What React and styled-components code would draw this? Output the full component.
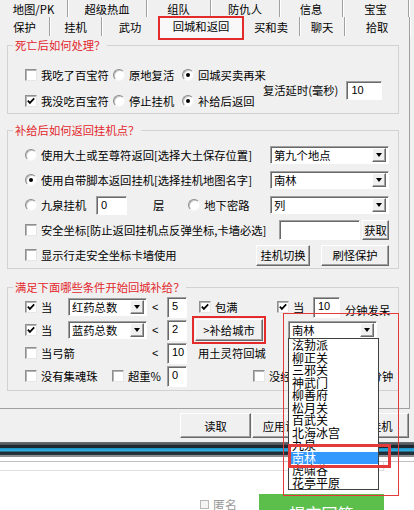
import React from 'react';
import styled, { createGlobalStyle, css } from 'styled-components';

const GlobalStyle = createGlobalStyle`
  html, body { margin: 0; padding: 0; background: #fff; }
  body {
    font-family: "Noto Sans CJK SC", "Noto Sans", sans-serif;
    font-size: 11.3px;
    color: #000;
  }
  * { box-sizing: border-box; }
`;

const topTabs = [
  { label: '地图/PK', w: 68 },
  { label: '超级热血', w: 79 },
  { label: '组队', w: 64 },
  { label: '防仇人', w: 69 },
  { label: '信息', w: 63 },
  { label: '宝宝', w: 66 },
];

const bottomTabs = [
  { label: '保护', w: 50 },
  { label: '挂机', w: 52 },
  { label: '武功', w: 57 },
  { label: '回城和返回', w: 84, active: true },
  { label: '买和卖', w: 57 },
  { label: '聊天', w: 45 },
  { label: '拾取', w: 65 },
];

const cities = [
  '泫勃派', '柳正关', '三邪关', '神武门', '柳善府', '松月关',
  '百武关', '北海冰宫', '九泉', '南林', '虎啸谷', '花亭平原',
];

export default function App() {
  return (
    <>
      <GlobalStyle />
      <Window>
        <Dialog>
          <TabStrip>
            <TabRow $h={17}>
              {topTabs.map((t) => (
                <Tab key={t.label} $w={t.w}>{t.label}</Tab>
              ))}
            </TabRow>
            <TabRow $h={19}>
              {bottomTabs.map((t) => (
                <Tab key={t.label} $w={t.w} $active={t.active}>{t.label}</Tab>
              ))}
            </TabRow>
          </TabStrip>

          <Panel>
            <Group $mt={0} $pt={13} $pb={2}>
              <Legend>死亡后如何处理？</Legend>
              <DeathBody>
                <ChoiceGrid>
                  <Check>我吃了百宝符</Check>
                  <Radio>原地复活</Radio>
                  <Radio checked>回城买卖再来</Radio>
                  <Check checked>我没吃百宝符</Check>
                  <Radio>停止挂机</Radio>
                  <Radio checked>补给后返回</Radio>
                </ChoiceGrid>
                <DelayBox>
                  <span>复活延时(毫秒)</span>
                  <Field $w={36} $h={19}>10</Field>
                </DelayBox>
              </DeathBody>
            </Group>

            <Group $mt={9} $pt={8} $pb={3}>
              <Legend>补给后如何返回挂机点？</Legend>
              <Rows $gap={5}>
                <Row>
                  <Radio>使用大土或至尊符返回[选择大土保存位置]</Radio>
                  <Select $w={119} $ml="auto">第九个地点</Select>
                </Row>
                <Row>
                  <Radio checked>使用自带脚本返回挂机[选择挂机地图名字]</Radio>
                  <Select $w={119} $ml="auto">南林</Select>
                </Row>
                <Row>
                  <Radio w={71}>九泉挂机</Radio>
                  <Field $w={31} $h={19}>0</Field>
                  <Text $ml={26}>层</Text>
                  <Radio ml={24}>地下密路</Radio>
                  <Select $w={119} $ml="auto">列</Select>
                </Row>
                <Row>
                  <Check>安全坐标[防止返回挂机点反弹坐标,卡墙必选]</Check>
                  <Field $w={81} $h={20} $ml="auto" />
                  <Button $w={27} $h={20} $ml={2}>获取</Button>
                </Row>
                <Row>
                  <Check>显示行走安全坐标卡墙使用</Check>
                  <Button $w={54} $h={21} $ml="auto">挂机切换</Button>
                  <Button $w={68} $h={21} $ml={11}>刷怪保护</Button>
                </Row>
              </Rows>
            </Group>

            <Group $mt={11} $pt={3} $pb={4}>
              <Legend>满足下面哪些条件开始回城补给？</Legend>
              <Rows $gap={3}>
                <Row>
                  <Check checked w={43}>当</Check>
                  <Select $w={79}>红药总数</Select>
                  <Less>&lt;</Less>
                  <Field $w={20} $h={21}>5</Field>
                  <Check checked w={78} ml={12}>包满</Check>
                  <Check checked w={36}>当</Check>
                  <Field $w={27} $h={21}>10</Field>
                  <Text $ml={5} $dy={3}>分钟发呆</Text>
                </Row>
                <Row>
                  <Check checked w={43}>当</Check>
                  <Select $w={79}>蓝药总数</Select>
                  <Less>&lt;</Less>
                  <Field $w={20} $h={21}>2</Field>
                  <Button $w={68} $h={22} $ml={8} $marked>&gt;补给城市</Button>
                  <Select $w={89} $h={18} $ml={25}>南林</Select>
                </Row>
                <Row>
                  <Check w={122}>当弓箭</Check>
                  <Less>&lt;</Less>
                  <Field $w={20} $h={21}>10</Field>
                  <Text $ml={11}>用土灵符回城</Text>
                </Row>
                <Row>
                  <Check w={87}>没有集魂珠</Check>
                  <Check w={55}>超重%</Check>
                  <Field $w={20} $h={21}>0</Field>
                  <Check ml={66}>没经验挂机超过十五分钟</Check>
                </Row>
              </Rows>
            </Group>
          </Panel>

          <ActionRow>
            <Button $w={71} $h={25}>读取</Button>
            <Button $w={78} $h={25}>应用设置值</Button>
            <Button $w={78} $h={25}>开始挂机</Button>
          </ActionRow>
        </Dialog>

        <Taskbar />

        <Lower>
          <Rule />
          <Strip />
          <Footer>
            <SmallBox />
            <Muted>匿名</Muted>
            <Submit>提交回答</Submit>
          </Footer>
        </Lower>

        <CityList>
          {cities.map((c) => (
            <CityItem key={c} $selected={c === '南林'}>{c}</CityItem>
          ))}
        </CityList>
        <Mark $x={283} $y={313} $w={116} $h={183} $t={1} />
        <Mark $x={288} $y={444} $w={103} $h={24} $t={3} />
      </Window>
    </>
  );
}

function Check({ checked, children, w, ml }) {
  return (
    <Choice $w={w} $ml={ml}>
      <CheckBox>
        {checked && (
          <svg width="8" height="8" viewBox="0 0 8 8">
            <polyline points="0.8,3.6 2.9,5.9 7.2,1.4" fill="none" stroke="#000" strokeWidth="1.7" />
          </svg>
        )}
      </CheckBox>
      {children && <span>{children}</span>}
    </Choice>
  );
}

function Radio({ checked, children, w, ml }) {
  return (
    <Choice $w={w} $ml={ml}>
      <RadioDot $on={checked} />
      <span>{children}</span>
    </Choice>
  );
}

function Select({ children, $w, $h = 18, $ml }) {
  return (
    <SelectBox $w={$w} $h={$h} $ml={$ml}>
      <SelectText>{children}</SelectText>
      <Arrow />
    </SelectBox>
  );
}

const px = (v) => (v === 'auto' ? 'auto' : `${v || 0}px`);

const Window = styled.div`
  position: relative;
  width: 414px;
  height: 510px;
  overflow: hidden;
  background: #fff;
  display: flex;
  flex-direction: column;
`;

const Dialog = styled.div`
  height: 442px;
  flex: none;
  background: #f0f0f0;
  display: flex;
  flex-direction: column;
`;

const TabStrip = styled.div`
  height: 36px;
  display: flex;
  flex-direction: column;
`;

const TabRow = styled.div`
  display: flex;
  height: ${(p) => p.$h}px;
  align-items: flex-start;
`;

const Tab = styled.div`
  flex: none;
  width: ${(p) => p.$w}px;
  height: 100%;
  display: flex;
  align-items: center;
  justify-content: center;
  border-right: 1px solid #a0a0a0;
  box-shadow: 1px 0 0 #fff;
  white-space: nowrap;
  position: relative;

  ${(p) =>
    p.$active &&
    css`
      height: 22px;
      background: #f8f8f8;
      border: 1px solid #fff;
      border-right-color: #a0a0a0;
      outline: 2px solid #e42b2b;
      outline-offset: -1px;
      z-index: 2;
      padding-bottom: 4px;
    `}
`;

const Panel = styled.div`
  width: 410px;
  height: 373px;
  flex: none;
  padding: 2px 10px 0 7px;
  border-right: 1px solid #a0a0a0;
  border-bottom: 1px solid #a0a0a0;
  display: flex;
  flex-direction: column;
`;

const Group = styled.fieldset`
  margin: ${(p) => p.$mt}px 0 0 0;
  width: 392px;
  padding: ${(p) => p.$pt}px 9px ${(p) => p.$pb}px 17px;
  border: 1px solid #d2d2d2;
  min-width: 0;
`;

const Legend = styled.legend`
  margin-left: -12px;
  padding: 0 2px;
  line-height: 14px;
  font-size: 11.3px;
  color: #e3262b;
`;

const DeathBody = styled.div`
  display: flex;
`;

const ChoiceGrid = styled.div`
  display: grid;
  grid-template-columns: 88px 69px 81px;
  grid-auto-rows: 20px;
  row-gap: 6px;
`;

const DelayBox = styled.div`
  display: flex;
  align-items: center;
  gap: 8px;
  align-self: center;
  margin-top: 4px;
  white-space: nowrap;
`;

const Rows = styled.div`
  display: flex;
  flex-direction: column;
  gap: ${(p) => p.$gap}px;
`;

const Row = styled.div`
  display: flex;
  align-items: center;
  height: 20px;
`;

const Choice = styled.label`
  display: flex;
  align-items: center;
  gap: 4px;
  flex: none;
  white-space: nowrap;
  width: ${(p) => (p.$w ? `${p.$w}px` : 'auto')};
  margin-left: ${(p) => px(p.$ml)};
`;

const CheckBox = styled.span`
  width: 12px;
  height: 12px;
  flex: none;
  background: #fff;
  border: 1px solid;
  border-color: #8f8f8f #e6e6e6 #e6e6e6 #8f8f8f;
  box-shadow: inset 1px 1px 0 #b4b4b4;
  display: flex;
  align-items: center;
  justify-content: center;
`;

const RadioDot = styled.span`
  width: 12px;
  height: 12px;
  flex: none;
  border-radius: 50%;
  background: #fff;
  border: 1px solid;
  border-color: #8a8a8a #f6f6f6 #f6f6f6 #8a8a8a;
  box-shadow: inset 1px 1px 0 #c4c4c4;
  display: flex;
  align-items: center;
  justify-content: center;

  &::after {
    content: '';
    width: 4px;
    height: 4px;
    border-radius: 50%;
    background: ${(p) => (p.$on ? '#000' : 'transparent')};
  }
`;

const sunken = css`
  background: #fff;
  border: 1px solid;
  border-color: #a0a0a0 #fff #fff #a0a0a0;
  box-shadow: inset 1px 1px 0 #696969;
`;

const Field = styled.div`
  ${sunken};
  flex: none;
  width: ${(p) => p.$w}px;
  height: ${(p) => p.$h}px;
  margin-left: ${(p) => px(p.$ml)};
  padding: 2px 3px 0 4px;
  line-height: 12px;
  font-family: "Liberation Sans", sans-serif;
  font-size: 11px;
`;

const SelectBox = styled.div`
  ${sunken};
  flex: none;
  width: ${(p) => p.$w}px;
  height: ${(p) => p.$h}px;
  margin-left: ${(p) => px(p.$ml)};
  display: flex;
  padding: 1px 2px 1px 3px;
`;

const SelectText = styled.span`
  flex: 1;
  line-height: 14px;
  overflow: hidden;
  white-space: nowrap;
`;

const raised = css`
  background: #f0f0f0;
  border: 1px solid;
  border-color: #fff #696969 #696969 #fff;
  box-shadow: inset -1px -1px 0 #a0a0a0;
`;

const Arrow = styled.span`
  ${raised};
  width: 14px;
  flex: none;
  display: flex;
  align-items: center;
  justify-content: center;

  &::after {
    content: '';
    border-left: 3.5px solid transparent;
    border-right: 3.5px solid transparent;
    border-top: 4px solid #000;
  }
`;

const Button = styled.button`
  ${raised};
  flex: none;
  width: ${(p) => p.$w}px;
  height: ${(p) => p.$h}px;
  margin-left: ${(p) => px(p.$ml)};
  padding: 0;
  font-family: inherit;
  font-size: 11.3px;
  color: #000;
  white-space: nowrap;

  ${(p) =>
    p.$marked &&
    css`
      outline: 2px solid #e42b2b;
      outline-offset: 1px;
    `}
`;

const Text = styled.span`
  flex: none;
  white-space: nowrap;
  margin-left: ${(p) => px(p.$ml)};
  transform: translateY(${(p) => p.$dy || 0}px);
`;

const Less = styled.span`
  flex: none;
  width: 20px;
  padding-left: 5px;
  font-family: "Liberation Sans", sans-serif;
  font-size: 11px;
`;

const ActionRow = styled.div`
  display: flex;
  gap: 1px;
  margin-top: 4px;
  padding-left: 180px;
`;

const Taskbar = styled.div`
  height: 15px;
  flex: none;
  background: linear-gradient(
    to bottom,
    #6a6f73 0,
    #4a5258 3px,
    #1d2831 3px,
    #1d2831 6px,
    #1b8fc4 6px,
    #30b3e4 9px,
    #1c2a33 10px,
    #27343c 13px,
    #8a8f93 13px,
    #8a8f93 15px
  );
`;

const Lower = styled.div`
  flex: 1;
  display: flex;
  flex-direction: column;
  background: #fff;
`;

const Rule = styled.div`
  height: 1px;
  margin-top: 4px;
  background: #c2c2c2;
`;

const Strip = styled.div`
  width: 384px;
  height: 9px;
  border: 1px solid #e0e0e0;
  border-top: none;
  border-left: none;
`;

const Footer = styled.div`
  display: flex;
  align-items: flex-start;
  margin-top: 23px;
  padding-left: 200px;
`;

const SmallBox = styled.span`
  width: 9px;
  height: 9px;
  margin-top: 6px;
  border: 1px solid #b8b8b8;
  background: #f4f4f4;
`;

const Muted = styled.span`
  margin-left: 4px;
  margin-top: 2px;
  font-size: 12px;
  color: #999;
`;

const Submit = styled.div`
  margin-left: 22px;
  width: 125px;
  height: 38px;
  flex: none;
  background: #5cbf4c;
  color: #fff;
  font-size: 16px;
  display: flex;
  align-items: center;
  justify-content: center;
`;

const CityList = styled.div`
  position: absolute;
  left: 288px;
  top: 338px;
  width: 91px;
  background: #fff;
  border: 1px solid #404040;
  z-index: 5;
`;

const CityItem = styled.div`
  height: 12.5px;
  line-height: 12.5px;
  padding-left: 3px;
  font-size: 12px;
  white-space: nowrap;
  background: ${(p) => (p.$selected ? '#3399ff' : 'transparent')};
  color: ${(p) => (p.$selected ? '#fff' : '#000')};
`;

const Mark = styled.div`
  position: absolute;
  left: ${(p) => p.$x}px;
  top: ${(p) => p.$y}px;
  width: ${(p) => p.$w}px;
  height: ${(p) => p.$h}px;
  border: ${(p) => p.$t}px solid #e43a3a;
  z-index: 6;
  pointer-events: none;
`;
